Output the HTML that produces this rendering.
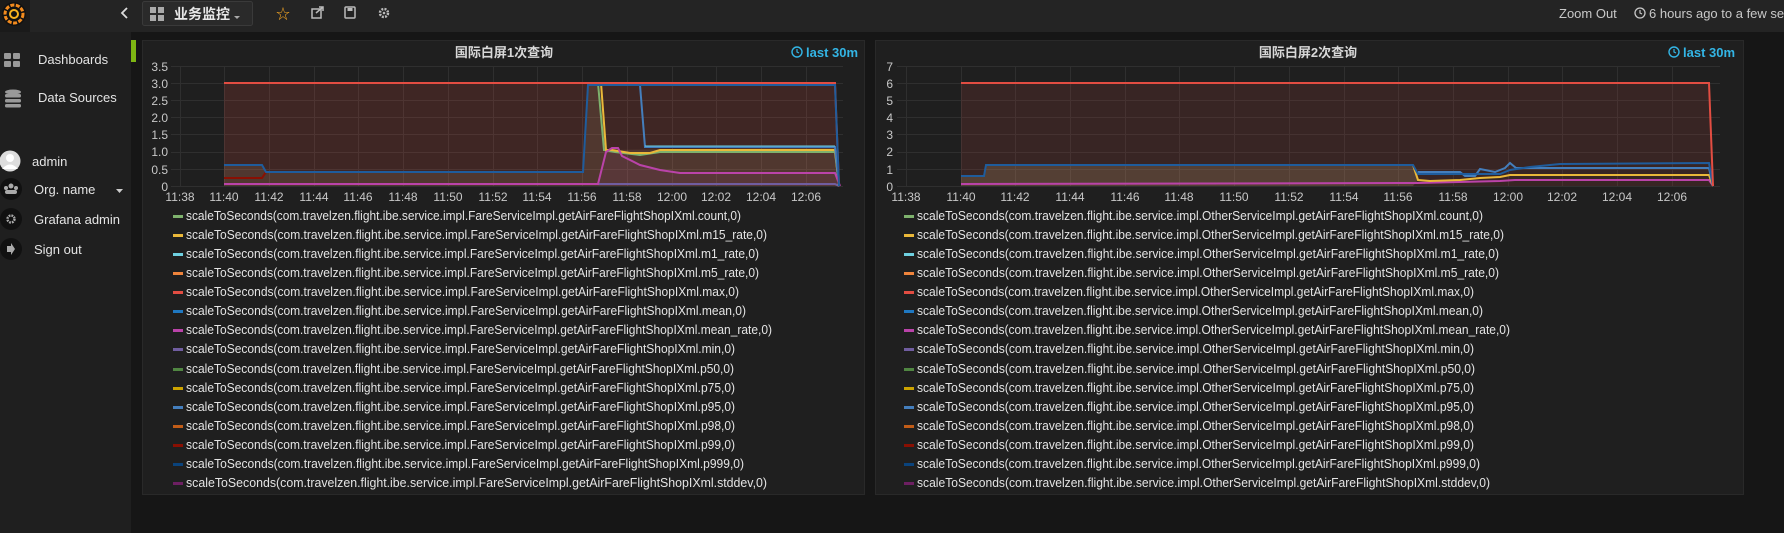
<!DOCTYPE html>
<html><head><meta charset="utf-8"><style>
html,body{margin:0;padding:0;background:#161616;width:1784px;height:533px;overflow:hidden}
svg{display:block}
text{font-family:"Liberation Sans","Noto Sans CJK SC",sans-serif}
</style></head><body>
<svg width="1784" height="533" viewBox="0 0 1784 533" xmlns="http://www.w3.org/2000/svg">
<rect width="1784" height="533" fill="#161616"/>
<!-- top nav -->
<rect x="0" y="0" width="1784" height="32" fill="#242424"/>
<rect x="0" y="0" width="30" height="32" fill="#1a1a1a"/>
<circle cx="14" cy="14" r="12" fill="#111"/>
<circle cx="14" cy="14" r="9" fill="none" stroke="#f38b1e" stroke-width="3" stroke-dasharray="4 1.5"/>
<circle cx="14" cy="14" r="4" fill="none" stroke="#f7b21e" stroke-width="2"/>
<path d="M127 8 L122 13 L127 18" fill="none" stroke="#ddd" stroke-width="1.8"/>
<rect x="142.5" y="1.5" width="110" height="24" rx="2" fill="#2a2a2a" stroke="#3a3a3a"/>
<g fill="#aaa"><rect x="150" y="7" width="6" height="6"/><rect x="158" y="7" width="6" height="6"/><rect x="150" y="15" width="6" height="6"/><rect x="158" y="15" width="6" height="6"/></g>
<text x="174" y="19" font-size="14" font-weight="bold" fill="#e8e8e8">业务监控</text>
<path d="M234 16 L240 16 L237 19 Z" fill="#aaa"/>
<text x="276" y="19" font-size="14" fill="#f5a623">☆</text>
<rect x="312" y="9" width="9" height="9" fill="none" stroke="#bbb" stroke-width="1.5"/>
<path d="M316 13 L323 7 M319 7 L323 7 L323 11" stroke="#bbb" stroke-width="1.5" fill="none"/>
<rect x="345" y="7" width="10" height="11" rx="1" fill="none" stroke="#bbb" stroke-width="1.5"/>
<rect x="347.5" y="8" width="5" height="3" fill="#bbb"/>
<circle cx="384" cy="13" r="4" fill="none" stroke="#bbb" stroke-width="2.5" stroke-dasharray="2 1.2"/>
<circle cx="384" cy="13" r="1.3" fill="#bbb"/>
<text x="1559" y="18" font-size="13" fill="#c8c8c8">Zoom Out</text>
<circle cx="1640" cy="13" r="5" fill="none" stroke="#c8c8c8" stroke-width="1.3"/>
<path d="M1640 10 L1640 13 L1642 14" stroke="#c8c8c8" fill="none" stroke-width="1.2"/>
<text x="1649" y="18" font-size="13" fill="#c8c8c8">6 hours ago to a few seconds ago</text>
<!-- sidebar -->
<rect x="0" y="32" width="131" height="501" fill="#1f1f1f"/>
<rect x="131" y="40" width="5" height="22" fill="#7eb613"/>
<g fill="#999"><rect x="4" y="53" width="7" height="6" rx="1"/><rect x="13" y="53" width="7" height="6" rx="1"/><rect x="4" y="61" width="7" height="6" rx="1"/><rect x="13" y="61" width="7" height="6" rx="1"/></g>
<text x="38" y="64" font-size="13" fill="#e4e4e4">Dashboards</text>
<g fill="#999"><ellipse cx="13" cy="92" rx="8" ry="2.5"/><rect x="5" y="94" width="16" height="3.5" rx="1.5"/><rect x="5" y="99" width="16" height="3.5" rx="1.5"/><rect x="5" y="104" width="16" height="3.5" rx="1.5"/></g>
<text x="38" y="102" font-size="13" fill="#e4e4e4">Data Sources</text>
<circle cx="10" cy="161" r="10.5" fill="#ddd"/>
<circle cx="10" cy="158" r="4" fill="#fff"/><path d="M2 169 Q10 160 18 169" fill="#fff"/>
<text x="32" y="166" font-size="13" fill="#e4e4e4">admin</text>
<circle cx="11" cy="189" r="11" fill="#111"/>
<g fill="#aaa"><circle cx="11" cy="186" r="2.5"/><circle cx="6" cy="188" r="2"/><circle cx="16" cy="188" r="2"/><rect x="5" y="190" width="12" height="4" rx="2"/></g>
<text x="34" y="194" font-size="13" fill="#e4e4e4">Org. name</text>
<path d="M116 189 L123 189 L119.5 193 Z" fill="#ccc"/>
<circle cx="11" cy="219" r="11" fill="#111"/>
<circle cx="11" cy="219" r="3.5" fill="none" stroke="#aaa" stroke-width="2.4" stroke-dasharray="1.8 1"/>
<text x="34" y="224" font-size="13" fill="#e4e4e4">Grafana admin</text>
<circle cx="11" cy="249" r="11" fill="#111"/>
<path d="M7 246 L11 246 L11 243 L15 249 L11 255 L11 252 L7 252 Z" fill="#aaa"/>
<text x="34" y="254" font-size="13" fill="#e4e4e4">Sign out</text>

<!-- PANEL 1 -->
<rect x="142.5" y="40.5" width="722" height="454" fill="#1f1f1f" stroke="#292929"/>
<text x="504" y="57" font-size="13" font-weight="bold" fill="#d8d8d8" text-anchor="middle">国际白屏1次查询</text>
<circle cx="797" cy="52" r="5" fill="none" stroke="#33b5e5" stroke-width="1.4"/>
<path d="M797 49 L797 52 L799 53" stroke="#33b5e5" fill="none" stroke-width="1.2"/>
<text x="806" y="57" font-size="13" font-weight="bold" fill="#33b5e5">last 30m</text>
<g stroke="#2f2f2f" stroke-width="1">
<path d="M171 66.5H843M171 83.5H843M171 100.5H843M171 117.5H843M171 134.5H843M171 152.5H843M171 169.5H843M171 186.5H843"/>
<path d="M180.5 66V186M224.5 66V186M269.5 66V186M314.5 66V186M358.5 66V186M403.5 66V186M448.5 66V186M493.5 66V186M537.5 66V186M582.5 66V186M627.5 66V186M672.5 66V186M716.5 66V186M761.5 66V186M806.5 66V186"/>
</g>
<g font-size="12" fill="#c8c8c8" text-anchor="end">
<text x="168" y="71">3.5</text><text x="168" y="88">3.0</text><text x="168" y="105">2.5</text><text x="168" y="122">2.0</text><text x="168" y="139">1.5</text><text x="168" y="156">1.0</text><text x="168" y="174">0.5</text><text x="168" y="191">0</text>
</g>
<g font-size="12" fill="#c8c8c8" text-anchor="middle">
<text x="180" y="201">11:38</text><text x="224" y="201">11:40</text><text x="269" y="201">11:42</text><text x="314" y="201">11:44</text><text x="358" y="201">11:46</text><text x="403" y="201">11:48</text><text x="448" y="201">11:50</text><text x="493" y="201">11:52</text><text x="537" y="201">11:54</text><text x="582" y="201">11:56</text><text x="627" y="201">11:58</text><text x="672" y="201">12:00</text><text x="716" y="201">12:02</text><text x="761" y="201">12:04</text><text x="806" y="201">12:06</text>
</g>
<path d="M224 186 L224 83 L835 83 L839 186 Z" fill="rgba(226,77,66,0.17)"/>
<path d="M224 186 L224 165 L262 165 L266 172 L583 172 L588 85 L598 85 L606 150 L835 147 L839 186 Z" fill="rgba(200,170,120,0.13)"/>
<path d="M598 186 L606 152 L618 148 L640 165 L680 173 L835 173 L840 186 Z" fill="rgba(186,67,169,0.08)"/>
<g fill="none" stroke-width="2">
<path d="M224 184 L835 184 L839 186" stroke="#705DA0"/>
<path d="M224 178 L262 178 L266 172 L583 172" stroke="#890F02"/>
<path d="M598 83 L604 150 L615 152 L640 155 L660 152 L835 152 L839 186" stroke="#7EB26D"/>
<path d="M601 83 L606 150 L612 150 L630 153 L650 153 L660 150 L835 150 L839 186" stroke="#EAB839"/>
<path d="M640 85 L645 147 L835 147 L839 186" stroke="#447EBC"/>
<path d="M645 146 L835 146" stroke="#6ED0E0" stroke-width="1"/>
<path d="M224 184 L598 184 L606 152 L612 148 L618 148 L622 156 L630 160 L640 165 L660 170 L680 173 L835 173 L840 186" stroke="#BA43A9"/>
<path d="M224 83 L835 83 L839 186" stroke="#E24D42"/>
<path d="M224 165 L262 165 L266 172 L583 172 L588 85 L835 85 L839 186" stroke="#1F5C9C"/>
</g>
<g font-size="13" fill="#e4e4e4">
<text x="186" y="220" textLength="555" lengthAdjust="spacingAndGlyphs">scaleToSeconds(com.travelzen.flight.ibe.service.impl.FareServiceImpl.getAirFareFlightShopIXml.count,0)</text>
<text x="186" y="239" textLength="581" lengthAdjust="spacingAndGlyphs">scaleToSeconds(com.travelzen.flight.ibe.service.impl.FareServiceImpl.getAirFareFlightShopIXml.m15_rate,0)</text>
<text x="186" y="258" textLength="573" lengthAdjust="spacingAndGlyphs">scaleToSeconds(com.travelzen.flight.ibe.service.impl.FareServiceImpl.getAirFareFlightShopIXml.m1_rate,0)</text>
<text x="186" y="277" textLength="573" lengthAdjust="spacingAndGlyphs">scaleToSeconds(com.travelzen.flight.ibe.service.impl.FareServiceImpl.getAirFareFlightShopIXml.m5_rate,0)</text>
<text x="186" y="296" textLength="553" lengthAdjust="spacingAndGlyphs">scaleToSeconds(com.travelzen.flight.ibe.service.impl.FareServiceImpl.getAirFareFlightShopIXml.max,0)</text>
<text x="186" y="315" textLength="560" lengthAdjust="spacingAndGlyphs">scaleToSeconds(com.travelzen.flight.ibe.service.impl.FareServiceImpl.getAirFareFlightShopIXml.mean,0)</text>
<text x="186" y="334" textLength="586" lengthAdjust="spacingAndGlyphs">scaleToSeconds(com.travelzen.flight.ibe.service.impl.FareServiceImpl.getAirFareFlightShopIXml.mean_rate,0)</text>
<text x="186" y="353" textLength="549" lengthAdjust="spacingAndGlyphs">scaleToSeconds(com.travelzen.flight.ibe.service.impl.FareServiceImpl.getAirFareFlightShopIXml.min,0)</text>
<text x="186" y="373" textLength="548" lengthAdjust="spacingAndGlyphs">scaleToSeconds(com.travelzen.flight.ibe.service.impl.FareServiceImpl.getAirFareFlightShopIXml.p50,0)</text>
<text x="186" y="392" textLength="549" lengthAdjust="spacingAndGlyphs">scaleToSeconds(com.travelzen.flight.ibe.service.impl.FareServiceImpl.getAirFareFlightShopIXml.p75,0)</text>
<text x="186" y="411" textLength="549" lengthAdjust="spacingAndGlyphs">scaleToSeconds(com.travelzen.flight.ibe.service.impl.FareServiceImpl.getAirFareFlightShopIXml.p95,0)</text>
<text x="186" y="430" textLength="549" lengthAdjust="spacingAndGlyphs">scaleToSeconds(com.travelzen.flight.ibe.service.impl.FareServiceImpl.getAirFareFlightShopIXml.p98,0)</text>
<text x="186" y="449" textLength="549" lengthAdjust="spacingAndGlyphs">scaleToSeconds(com.travelzen.flight.ibe.service.impl.FareServiceImpl.getAirFareFlightShopIXml.p99,0)</text>
<text x="186" y="468" textLength="558" lengthAdjust="spacingAndGlyphs">scaleToSeconds(com.travelzen.flight.ibe.service.impl.FareServiceImpl.getAirFareFlightShopIXml.p999,0)</text>
<text x="186" y="487" textLength="581" lengthAdjust="spacingAndGlyphs">scaleToSeconds(com.travelzen.flight.ibe.service.impl.FareServiceImpl.getAirFareFlightShopIXml.stddev,0)</text>
</g>
<g>
<rect x="173" y="215" width="10" height="3" fill="#7EB26D"/><rect x="173" y="234" width="10" height="3" fill="#EAB839"/><rect x="173" y="253" width="10" height="3" fill="#6ED0E0"/><rect x="173" y="272" width="10" height="3" fill="#EF843C"/><rect x="173" y="291" width="10" height="3" fill="#E24D42"/><rect x="173" y="310" width="10" height="3" fill="#1F78C1"/><rect x="173" y="329" width="10" height="3" fill="#BA43A9"/><rect x="173" y="348" width="10" height="3" fill="#705DA0"/><rect x="173" y="368" width="10" height="3" fill="#508642"/><rect x="173" y="387" width="10" height="3" fill="#CCA300"/><rect x="173" y="406" width="10" height="3" fill="#447EBC"/><rect x="173" y="425" width="10" height="3" fill="#C15C17"/><rect x="173" y="444" width="10" height="3" fill="#890F02"/><rect x="173" y="463" width="10" height="3" fill="#0A437C"/><rect x="173" y="482" width="10" height="3" fill="#6D1F62"/>
</g>

<!-- PANEL 2 -->
<rect x="875.5" y="40.5" width="868" height="454" fill="#1f1f1f" stroke="#292929"/>
<text x="1308" y="57" font-size="13" font-weight="bold" fill="#d8d8d8" text-anchor="middle">国际白屏2次查询</text>
<circle cx="1674" cy="52" r="5" fill="none" stroke="#33b5e5" stroke-width="1.4"/>
<path d="M1674 49 L1674 52 L1676 53" stroke="#33b5e5" fill="none" stroke-width="1.2"/>
<text x="1683" y="57" font-size="13" font-weight="bold" fill="#33b5e5">last 30m</text>
<g stroke="#2f2f2f" stroke-width="1">
<path d="M897 66.5H1720M897 83.5H1720M897 100.5H1720M897 117.5H1720M897 134.5H1720M897 152.5H1720M897 169.5H1720M897 186.5H1720"/>
<path d="M906.5 66V186M961.5 66V186M1015.5 66V186M1070.5 66V186M1125.5 66V186M1179.5 66V186M1234.5 66V186M1289.5 66V186M1344.5 66V186M1398.5 66V186M1453.5 66V186M1508.5 66V186M1562.5 66V186M1617.5 66V186M1672.5 66V186"/>
</g>
<g font-size="12" fill="#c8c8c8" text-anchor="end">
<text x="893" y="71">7</text><text x="893" y="88">6</text><text x="893" y="105">5</text><text x="893" y="122">4</text><text x="893" y="139">3</text><text x="893" y="156">2</text><text x="893" y="174">1</text><text x="893" y="191">0</text>
</g>
<g font-size="12" fill="#c8c8c8" text-anchor="middle">
<text x="906" y="201">11:38</text><text x="961" y="201">11:40</text><text x="1015" y="201">11:42</text><text x="1070" y="201">11:44</text><text x="1125" y="201">11:46</text><text x="1179" y="201">11:48</text><text x="1234" y="201">11:50</text><text x="1289" y="201">11:52</text><text x="1344" y="201">11:54</text><text x="1398" y="201">11:56</text><text x="1453" y="201">11:58</text><text x="1508" y="201">12:00</text><text x="1562" y="201">12:02</text><text x="1617" y="201">12:04</text><text x="1672" y="201">12:06</text>
</g>
<path d="M961 186 L961 83 L1709 83 L1713 186 Z" fill="rgba(226,77,66,0.13)"/>
<path d="M961 186 L961 176 L984 176 L986 165 L1413 165 L1418 180 L1413 186 Z" fill="rgba(200,170,120,0.2)"/>
<g fill="none" stroke-width="2">
<path d="M961 184 L1418 183 L1500 181 L1515 180 L1709 180 L1713 186" stroke="#BA43A9"/>
<path d="M1413 165 L1418 180 L1430 181 L1460 180 L1480 178 L1500 177 L1510 175 L1709 175 L1713 186" stroke="#EAB839"/>
<path d="M1418 172 L1460 172 L1465 176 L1475 176 L1480 169 L1495 172 L1505 168 L1510 163 L1516 168 L1709 168 L1713 186" stroke="#447EBC"/>
<path d="M961 176 L984 176 L986 165 L1413 165 L1418 174 L1500 174 L1510 170 L1530 167 L1560 164 L1709 163 L1713 186" stroke="#1F5C9C"/>
<path d="M961 83 L1709 83 L1713 186" stroke="#E24D42"/>
</g>
<g font-size="13" fill="#e4e4e4">
<text x="917" y="220" textLength="566" lengthAdjust="spacingAndGlyphs">scaleToSeconds(com.travelzen.flight.ibe.service.impl.OtherServiceImpl.getAirFareFlightShopIXml.count,0)</text>
<text x="917" y="239" textLength="587" lengthAdjust="spacingAndGlyphs">scaleToSeconds(com.travelzen.flight.ibe.service.impl.OtherServiceImpl.getAirFareFlightShopIXml.m15_rate,0)</text>
<text x="917" y="258" textLength="582" lengthAdjust="spacingAndGlyphs">scaleToSeconds(com.travelzen.flight.ibe.service.impl.OtherServiceImpl.getAirFareFlightShopIXml.m1_rate,0)</text>
<text x="917" y="277" textLength="582" lengthAdjust="spacingAndGlyphs">scaleToSeconds(com.travelzen.flight.ibe.service.impl.OtherServiceImpl.getAirFareFlightShopIXml.m5_rate,0)</text>
<text x="917" y="296" textLength="557" lengthAdjust="spacingAndGlyphs">scaleToSeconds(com.travelzen.flight.ibe.service.impl.OtherServiceImpl.getAirFareFlightShopIXml.max,0)</text>
<text x="917" y="315" textLength="566" lengthAdjust="spacingAndGlyphs">scaleToSeconds(com.travelzen.flight.ibe.service.impl.OtherServiceImpl.getAirFareFlightShopIXml.mean,0)</text>
<text x="917" y="334" textLength="593" lengthAdjust="spacingAndGlyphs">scaleToSeconds(com.travelzen.flight.ibe.service.impl.OtherServiceImpl.getAirFareFlightShopIXml.mean_rate,0)</text>
<text x="917" y="353" textLength="557" lengthAdjust="spacingAndGlyphs">scaleToSeconds(com.travelzen.flight.ibe.service.impl.OtherServiceImpl.getAirFareFlightShopIXml.min,0)</text>
<text x="917" y="373" textLength="558" lengthAdjust="spacingAndGlyphs">scaleToSeconds(com.travelzen.flight.ibe.service.impl.OtherServiceImpl.getAirFareFlightShopIXml.p50,0)</text>
<text x="917" y="392" textLength="557" lengthAdjust="spacingAndGlyphs">scaleToSeconds(com.travelzen.flight.ibe.service.impl.OtherServiceImpl.getAirFareFlightShopIXml.p75,0)</text>
<text x="917" y="411" textLength="557" lengthAdjust="spacingAndGlyphs">scaleToSeconds(com.travelzen.flight.ibe.service.impl.OtherServiceImpl.getAirFareFlightShopIXml.p95,0)</text>
<text x="917" y="430" textLength="557" lengthAdjust="spacingAndGlyphs">scaleToSeconds(com.travelzen.flight.ibe.service.impl.OtherServiceImpl.getAirFareFlightShopIXml.p98,0)</text>
<text x="917" y="449" textLength="557" lengthAdjust="spacingAndGlyphs">scaleToSeconds(com.travelzen.flight.ibe.service.impl.OtherServiceImpl.getAirFareFlightShopIXml.p99,0)</text>
<text x="917" y="468" textLength="563" lengthAdjust="spacingAndGlyphs">scaleToSeconds(com.travelzen.flight.ibe.service.impl.OtherServiceImpl.getAirFareFlightShopIXml.p999,0)</text>
<text x="917" y="487" textLength="573" lengthAdjust="spacingAndGlyphs">scaleToSeconds(com.travelzen.flight.ibe.service.impl.OtherServiceImpl.getAirFareFlightShopIXml.stddev,0)</text>
</g>
<g>
<rect x="904" y="215" width="10" height="3" fill="#7EB26D"/><rect x="904" y="234" width="10" height="3" fill="#EAB839"/><rect x="904" y="253" width="10" height="3" fill="#6ED0E0"/><rect x="904" y="272" width="10" height="3" fill="#EF843C"/><rect x="904" y="291" width="10" height="3" fill="#E24D42"/><rect x="904" y="310" width="10" height="3" fill="#1F78C1"/><rect x="904" y="329" width="10" height="3" fill="#BA43A9"/><rect x="904" y="348" width="10" height="3" fill="#705DA0"/><rect x="904" y="368" width="10" height="3" fill="#508642"/><rect x="904" y="387" width="10" height="3" fill="#CCA300"/><rect x="904" y="406" width="10" height="3" fill="#447EBC"/><rect x="904" y="425" width="10" height="3" fill="#C15C17"/><rect x="904" y="444" width="10" height="3" fill="#890F02"/><rect x="904" y="463" width="10" height="3" fill="#0A437C"/><rect x="904" y="482" width="10" height="3" fill="#6D1F62"/>
</g>
</svg>
</body></html>
